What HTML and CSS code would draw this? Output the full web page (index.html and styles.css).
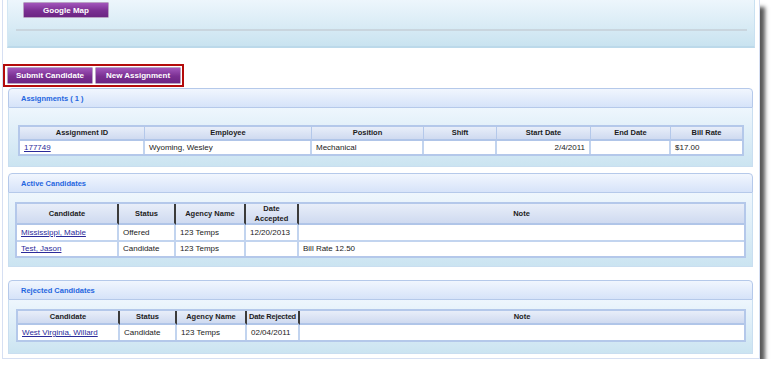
FILE: index.html
```html
<!DOCTYPE html>
<html lang="en">
  <head>
    <meta charset="UTF-8" />
    <title>Assignment Detail</title>
    <link rel="stylesheet" href="styles.css">
  </head>
  <body>
    <div id="frame">
      <div id="map-panel">
        <button class="btn map-btn">Google Map</button>
        <div class="map-rule"></div>
      </div>

      <div id="actions">
        <button class="btn action-btn">Submit Candidate</button>
        <button class="btn action-btn">New Assignment</button>
      </div>

      <!-- Assignments -->
      <div class="panel" id="assignments">
        <div class="panel-head">Assignments ( 1 )</div>
        <div class="panel-body">
          <table class="grid">
            <colgroup>
              <col style="width:125px"><col style="width:167px"><col style="width:112px"><col style="width:73px">
              <col style="width:94px"><col style="width:80px"><col>
            </colgroup>
            <tr>
              <th>Assignment ID</th><th>Employee</th><th>Position</th><th>Shift</th>
              <th>Start Date</th><th>End Date</th><th>Bill Rate</th>
            </tr>
            <tr class="short">
              <td><a href="#">177749</a></td><td>Wyoming, Wesley</td><td>Mechanical</td><td></td>
              <td class="num">2/4/2011</td><td></td><td>$17.00</td>
            </tr>
          </table>
        </div>
      </div>

      <!-- Active Candidates -->
      <div class="panel" id="active">
        <div class="panel-head">Active Candidates</div>
        <div class="panel-body">
          <table class="grid">
            <colgroup>
              <col style="width:102px"><col style="width:57px"><col style="width:70px"><col style="width:53px"><col>
            </colgroup>
            <tr class="tall">
              <th class="grip">Candidate</th><th class="grip">Status</th><th class="grip">Agency Name</th>
              <th class="grip">Date<br>Accepted</th><th>Note</th>
            </tr>
            <tr>
              <td><a href="#">Mississippi, Mable</a></td><td>Offered</td><td>123 Temps</td><td>12/20/2013</td><td></td>
            </tr>
            <tr class="short">
              <td><a href="#">Test, Jason</a></td><td>Candidate</td><td>123 Temps</td><td></td><td>Bill Rate 12.50</td>
            </tr>
          </table>
        </div>
      </div>

      <!-- Rejected Candidates -->
      <div class="panel" id="rejected">
        <div class="panel-head">Rejected Candidates</div>
        <div class="panel-body">
          <table class="grid">
            <colgroup>
              <col style="width:102px"><col style="width:57px"><col style="width:70px"><col style="width:53px"><col>
            </colgroup>
            <tr>
              <th class="grip">Candidate</th><th class="grip">Status</th><th class="grip">Agency Name</th>
              <th class="grip tight">Date Rejected</th><th>Note</th>
            </tr>
            <tr>
              <td><a href="#">West Virginia, Willard</a></td><td>Candidate</td><td>123 Temps</td><td>02/04/2011</td><td></td>
            </tr>
          </table>
        </div>
      </div>
    </div>
  </body>
</html>
```

FILE: styles.css
```css
body {
  margin: 0;
  padding: 0;
  background-color: #ffffff;
  font-family: "Liberation Sans", Arial, sans-serif;
  font-size: 8px;
  color: #222222;
  overflow: hidden;
}
#frame {
  width: 756px;
  margin-left: 2px;
  padding-bottom: 4px;
  background-color: #ffffff;
  border: 1px solid #d6dff2;
  border-top: none;
  box-shadow: 6px 6px 4px -1px rgba(60, 60, 60, 0.85);
}
#map-panel {
  margin: 0 4px 0 4px;
  padding: 2px 0 0 15px;
  height: 44px;
  background: linear-gradient(#edf6fc, #c9e3f0);
  border-left: 1px solid #d3e7f4;
  border-right: 1px solid #c9e1f1;
  border-bottom: 2px solid #bcd9ea;
}
.map-rule {
  margin: 11px 7px 0 -7px;
  height: 2px;
  background-color: #c9d5de;
}
.btn {
  font-family: "Liberation Sans", Arial, sans-serif;
  font-size: 8px;
  font-weight: bold;
  color: #ffffff;
  background: linear-gradient(#a256bb, #7a2f92 55%, #6c2583);
  border: 1px solid #b9a2c4;
  border-radius: 1px;
  padding: 0;
  cursor: pointer;
}
.map-btn {
  width: 86px;
  height: 16px;
  display: block;
}
#actions {
  display: flex;
  width: max-content;
  gap: 2px;
  margin-top: 16px;
  padding: 1px 1px 1px 2px;
  border: 2px solid #b40b0b;
}
.action-btn {
  width: 86px;
  height: 17px;
}
.panel {
  margin: 0 6px 0 5px;
}
#assignments {
  margin-top: 1px;
}
#active {
  margin-top: 6px;
}
#rejected {
  margin-top: 13px;
}
.panel-head {
  height: 18px;
  line-height: 20px;
  padding-left: 12px;
  font-size: 7.5px;
  font-weight: bold;
  color: #1f66e0;
  background: linear-gradient(#f1f6fe, #d6e3f9);
  border: 1px solid #b5c9ea;
  border-radius: 4px 4px 0 0;
}
.panel-body {
  background: linear-gradient(#eef6fd, #cbe4f1);
  border: 1px solid #c9def0;
  border-top: none;
}
#assignments .panel-body {
  padding: 17px 8px 10px 9px;
}
#active .panel-body {
  padding: 9px 6px 8px 6px;
}
#rejected .panel-body {
  padding: 9px 6px 11px 7px;
}
.grid {
  width: 100%;
  table-layout: fixed;
  border-collapse: separate;
  border-spacing: 0;
  border: 2px solid #b4c8ea;
  background-color: #ffffff;
}
.grid th {
  font-size: 7.5px;
  font-weight: bold;
  text-align: center;
  color: #1c1c1c;
  background: linear-gradient(#e8eef9, #cfdaf0);
  border-right: 1px solid #b4c8ea;
  border-bottom: 2px solid #b0c5e8;
  padding: 0 2px;
  line-height: 12px;
  white-space: nowrap;
}
.grid .tall th {
  line-height: 9.5px;
}
.grid th:last-child,
.grid td:last-child {
  border-right: none;
}
.grid th.grip {
  border-right: 2px solid #3b3b3b;
}
.grid th.tight {
  padding: 0;
  letter-spacing: -0.2px;
}
.grid td {
  padding: 0 4px;
  line-height: 15px;
  border-right: 2px solid #c2d4ef;
  border-bottom: 2px solid #c2d4ef;
  white-space: nowrap;
  overflow: hidden;
}
.grid tr:last-child td {
  border-bottom: none;
}
.grid .short td {
  line-height: 14px;
}
#assignments .grid .short td {
  line-height: 13px;
}
.grid td.num {
  text-align: right;
}
.grid a {
  color: #2b2b9a;
  text-decoration: underline;
}
```
